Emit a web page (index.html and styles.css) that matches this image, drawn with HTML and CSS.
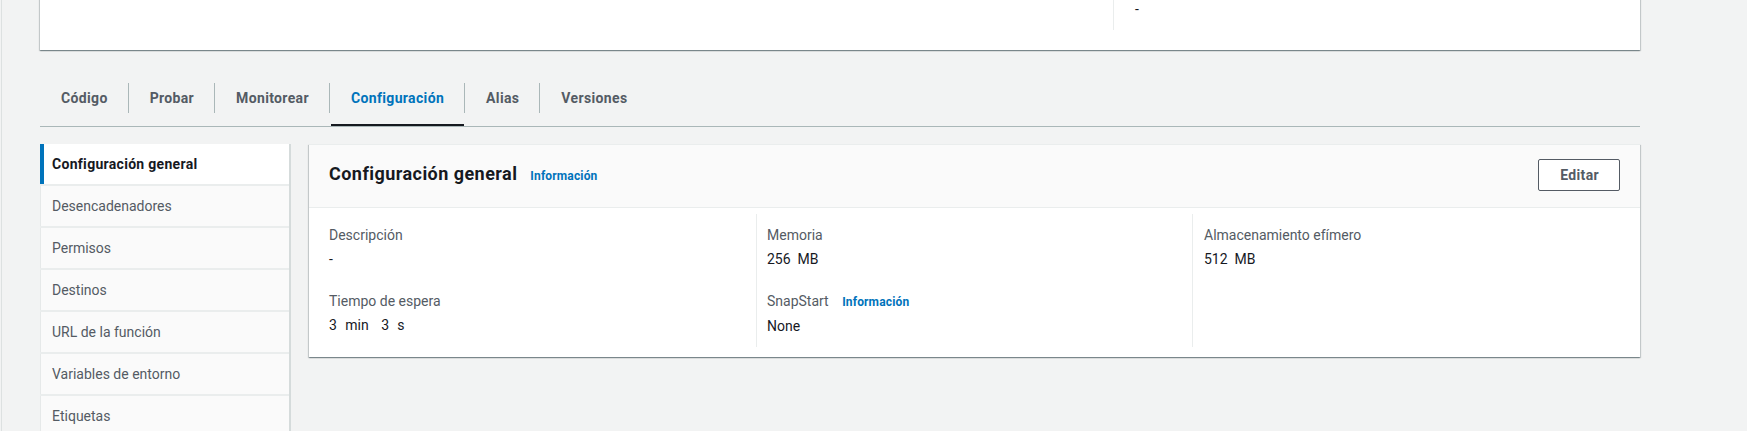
FILE: index.html
```html
<!DOCTYPE html>
<html lang="es">
<head>
<meta charset="utf-8">
<title>Configuración general</title>
<link rel="stylesheet" href="styles.css">
</head>
<body>
<div class="page">
  <div class="top-card">
    <div class="top-grid">
      <div class="top-col"></div>
      <div class="top-col top-col-bordered"><div class="value">-</div></div>
    </div>
  </div>

  <nav class="tabs">
    <a class="tab"><span class="tab-label">Código</span></a>
    <a class="tab"><span class="tab-label">Probar</span></a>
    <a class="tab"><span class="tab-label">Monitorear</span></a>
    <a class="tab tab-active"><span class="tab-label">Configuración</span></a>
    <a class="tab"><span class="tab-label">Alias</span></a>
    <a class="tab"><span class="tab-label">Versiones</span></a>
  </nav>

  <div class="config">
    <ul class="side-nav">
      <li class="side-item side-item-active">Configuración general</li>
      <li class="side-item">Desencadenadores</li>
      <li class="side-item">Permisos</li>
      <li class="side-item">Destinos</li>
      <li class="side-item">URL de la función</li>
      <li class="side-item">Variables de entorno</li>
      <li class="side-item">Etiquetas</li>
    </ul>

    <section class="panel">
      <header class="panel-head">
        <div class="panel-title">
          <h2>Configuración general</h2>
          <a class="info-link">Información</a>
        </div>
        <button class="btn">Editar</button>
      </header>
      <div class="panel-body">
        <div class="col">
          <div class="field">
            <div class="label">Descripción</div>
            <div class="value">-</div>
          </div>
          <div class="field">
            <div class="label">Tiempo de espera</div>
            <div class="value value-pre value-time">3  min   3  s</div>
          </div>
        </div>
        <div class="col col-bordered col-mid">
          <div class="field">
            <div class="label">Memoria</div>
            <div class="value value-pre">256  MB</div>
          </div>
          <div class="field">
            <div class="label">SnapStart <a class="info-link">Información</a></div>
            <div class="value">None</div>
          </div>
        </div>
        <div class="col col-bordered col-last">
          <div class="field">
            <div class="label">Almacenamiento efímero</div>
            <div class="value value-pre">512  MB</div>
          </div>
        </div>
      </div>
    </section>
  </div>
</div>
</body>
</html>
```

FILE: styles.css
```css
* { box-sizing: border-box; }

html, body {
  margin: 0;
  padding: 0;
  height: 431px;
  overflow: hidden;
  background: #f2f3f3;
}

body {
  font-family: Roboto, "Liberation Sans", Arial, sans-serif;
  font-size: 14px;
  line-height: 22px;
  color: #16191f;
}

.page {
  margin-left: 1px;
  border-left: 1px solid #dde1e1;
  padding: 0 107px 0 38px;
  min-height: 431px;
}

/* top card */
.top-card {
  margin-top: -3px;
  background: #fff;
  border-top: 1px solid #eaeded;
  box-shadow: 0 1px 1px 0 rgba(0, 28, 36, .3), 1px 1px 1px 0 rgba(0, 28, 36, .15), -1px 1px 1px 0 rgba(0, 28, 36, .15);
  padding: 0 20px 20px;
}

.top-grid {
  display: grid;
  grid-template-columns: 1053px 1fr;
}

.top-col {
  padding-bottom: 10px;
}

.top-col-bordered {
  border-left: 1px solid #eaeded;
  padding-left: 21px;
}

/* tabs */
.tabs {
  margin-top: 20px;
  display: flex;
  border-bottom: 1px solid #aab7b8;
}

.tab {
  position: relative;
  display: flex;
  align-items: center;
  height: 56px;
  font-weight: 700;
  letter-spacing: 0.35px;
  color: #545b64;
}

.tab-label {
  padding: 4px 20px 4px 21px;
  border-left: 1px solid #aab7b8;
}

.tab:first-child .tab-label {
  border-left: none;
}

.tab-active {
  color: #0073bb;
}

.tab-active::after {
  content: "";
  position: absolute;
  left: 2px;
  right: 0;
  bottom: 0;
  height: 2px;
  background: #16191f;
}

/* config area */
.config {
  margin-top: 17px;
  display: flex;
  align-items: flex-start;
  gap: 18px;
}

.side-nav {
  list-style: none;
  margin: 0;
  padding: 0;
  width: 251px;
  flex: none;
  display: flex;
  flex-direction: column;
  gap: 2px;
  background: #eaeded;
  border-right: 2px solid #d5dbdb;
}

.side-item {
  height: 40px;
  display: flex;
  align-items: center;
  padding-left: 11px;
  background: #fafafa;
  border-left: 1px solid #e6e9e9;
  color: #545b64;
}

.side-item-active {
  background: #fff;
  border-left: 4px solid #0073bb;
  padding-left: 8px;
  font-weight: 700;
  letter-spacing: 0.3px;
  color: #16191f;
}

/* panel */
.panel {
  flex: 1;
  background: #fff;
  border-top: 1px solid #eaeded;
  box-shadow: 0 1px 1px 0 rgba(0, 28, 36, .3), 1px 1px 1px 0 rgba(0, 28, 36, .15), -1px 1px 1px 0 rgba(0, 28, 36, .15);
}

.panel-head {
  display: flex;
  align-items: center;
  justify-content: space-between;
  background: #fafafa;
  padding: 14px 20px 16px;
  border-bottom: 1px solid #eaeded;
}

.panel-title {
  display: flex;
  align-items: baseline;
}

.panel-title h2 {
  margin: 0;
  font-size: 18px;
  line-height: 22px;
  font-weight: 700;
  letter-spacing: 0.45px;
  color: #16191f;
}

.info-link {
  font-size: 12px;
  font-weight: 700;
  letter-spacing: 0.15px;
  color: #0073bb;
  margin-left: 13px;
}

.btn {
  font-family: inherit;
  font-size: 14px;
  line-height: 22px;
  font-weight: 700;
  letter-spacing: 0.35px;
  color: #545b64;
  background: #fff;
  border: 1px solid #545b64;
  border-radius: 2px;
  padding: 4px 20px 4px 21px;
}

.panel-body {
  display: grid;
  grid-template-columns: 427px 436px 1fr;
  padding: 6px 20px 10px;
}

.col {
  padding: 10px 0;
}

.col-bordered {
  border-left: 1px solid #eaeded;
}

.col-mid { padding-left: 10px; }
.col-last { padding-left: 11px; }

.field + .field {
  margin-top: 20px;
}

.label {
  color: #545b64;
}

.label .info-link {
  margin-left: 10px;
}

.value {
  margin-top: 2px;
  color: #16191f;
}

.top-col .value { margin-top: 0; }

.value-pre {
  white-space: pre;
}

.value-time {
  word-spacing: 0.7px;
}
```
